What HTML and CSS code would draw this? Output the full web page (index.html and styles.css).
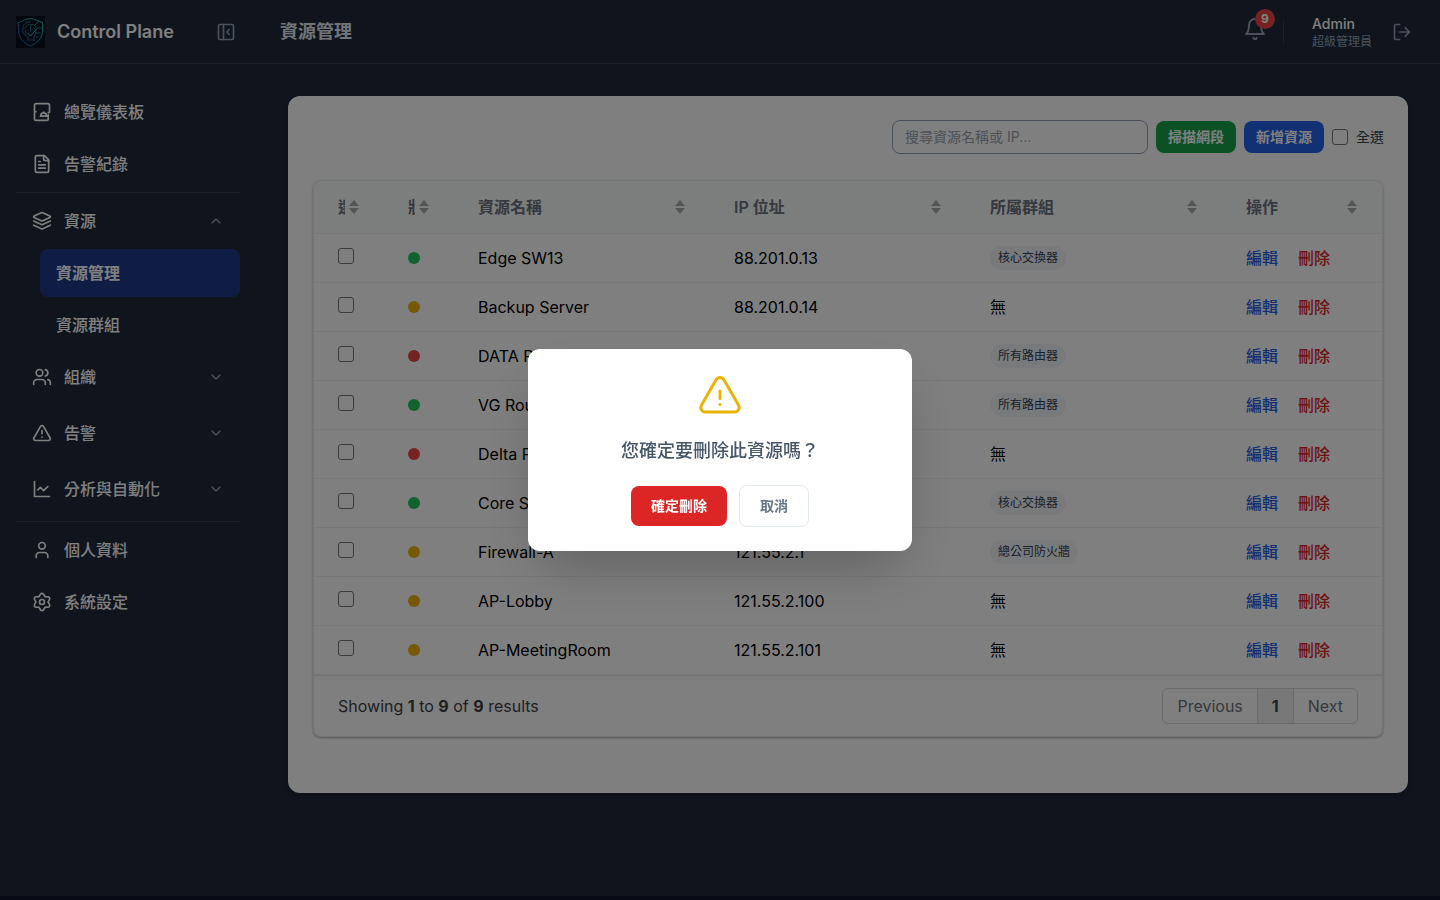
FILE: index.html
```html
<!DOCTYPE html>
<html lang="zh-TW">
<head>
<meta charset="utf-8">
<meta name="viewport" content="width=device-width, initial-scale=1">
<title>資源管理 - Control Plane</title>
<link rel="stylesheet" href="styles.css">
</head>
<body>
<svg class="sprite" aria-hidden="true">
  <symbol id="chevron-down" viewBox="0 0 24 24"><path d="m6 9 6 6 6-6"/></symbol>
  <symbol id="chevron-up" viewBox="0 0 24 24"><path d="m18 15-6-6-6 6"/></symbol>
  <symbol id="sort" viewBox="0 0 10 14"><path d="M0 6 5 0l5 6zM0 8l5 6 5-6z"/></symbol>
</svg>
<div class="app">
  <header class="topbar">
    <div class="brand">
      <svg class="logo" viewBox="0 0 29 32" aria-hidden="true">
        <defs><linearGradient id="lg" x1="0" y1="1" x2="1" y2="0"><stop offset="0" stop-color="#1d4fc0"/><stop offset=".5" stop-color="#1f90a0"/><stop offset="1" stop-color="#35c6a8"/></linearGradient></defs>
        <rect width="29" height="32" fill="#07101f" stroke="none"/>
        <g fill="none" stroke="url(#lg)">
          <path d="M2.5 6.500C7 5.500 10 2.500 14.500 2.500S22 5.500 26.500 6.500V15c0 7-5 12-12 15C7.500 27 2.500 22 2.500 15z"/>
          <path stroke-opacity=".8" d="M7 13c-1-4 3-7 7-7M9 12c1-3 4-4 6-3M7 13c-1 3 0 5 2 6M15 9c2-1 4 0 5 2M10 14c-2 3 0 6 2 7v3M14.500 11v4M18 12c3 2 2 6 0 9v3M12 24h6M19 9l4-4M21 12h4M20 17h4M20 21h2"/>
          <path d="m11.500 17 3 3 6-7" stroke="#38b8e0"/>
        </g>
      </svg>
      <span class="brand-name">Control Plane</span>
      <button class="icon-btn collapse" type="button" aria-label="收合側邊欄"><svg class="icon" viewBox="0 0 24 24"><rect x="3" y="3" width="18" height="18" rx="2"/><path d="M9 3v18M16 15l-3-3 3-3"/></svg></button>
    </div>
    <h1 class="title">資源管理</h1>
    <button class="bell" type="button" aria-label="通知"><svg class="icon-lg" viewBox="0 0 24 24"><path d="M6 8a6 6 0 0 1 12 0c0 7 3 9 3 9H3s3-2 3-9"/><path d="M10.300 21a1.940 1.940 0 0 0 3.400 0"/></svg><span class="badge">9</span></button>
    <div class="account"><span class="account-name">Admin</span><span class="account-role">超級管理員</span></div>
    <button class="icon-btn" type="button" aria-label="登出"><svg class="icon" viewBox="0 0 24 24"><path d="M9 21H5a2 2 0 0 1-2-2V5a2 2 0 0 1 2-2h4M16 17l5-5-5-5M21 12H9"/></svg></button>
  </header>
  <div class="body">
    <nav class="sidebar">
      <div class="nav-group">
        <a class="nav-link" href="#"><svg class="icon" viewBox="0 0 24 24"><path d="M19.500 15.500V20a2 2 0 0 1-2 2H5a2 2 0 0 1-2-2V4a2 2 0 0 1 2-2h14a2 2 0 0 1 2 2v8l-1.500 1M4.800 11.600h.01M10 17h9.500M10.500 16.500a3.500 3.500 0 0 1 7 0M14 12v1"/></svg>總覽儀表板</a>
        <a class="nav-link" href="#"><svg class="icon" viewBox="0 0 24 24"><path d="M15 2H6a2 2 0 0 0-2 2v16a2 2 0 0 0 2 2h12a2 2 0 0 0 2-2V7z"/><path d="M14 2v4a2 2 0 0 0 2 2h4M10 9H8M16 13H8M16 17H8"/></svg>告警紀錄</a>
      </div>
      <hr class="rule">
      <button class="nav-link" type="button"><svg class="icon" viewBox="0 0 24 24"><path d="m12.830 2.180a2 2 0 0 0-1.660 0L2.600 6.080a1 1 0 0 0 0 1.830l8.580 3.910a2 2 0 0 0 1.660 0l8.580-3.900a1 1 0 0 0 0-1.830z"/><path d="m22 12-9.170 4.170a2 2 0 0 1-1.660 0L2 12M22 17l-9.170 4.170a2 2 0 0 1-1.660 0L2 17"/></svg>資源<svg class="chevron"><use href="#chevron-up"/></svg></button>
      <div class="subnav">
        <a class="nav-link active" href="#">資源管理</a>
        <a class="nav-link" href="#">資源群組</a>
      </div>
      <div class="sections">
        <button class="nav-link" type="button"><svg class="icon" viewBox="0 0 24 24"><path d="M16 21v-2a4 4 0 0 0-4-4H6a4 4 0 0 0-4 4v2"/><circle cx="9" cy="7" r="4"/><path d="M22 21v-2a4 4 0 0 0-3-3.870M16 3.130a4 4 0 0 1 0 7.750"/></svg>組織<svg class="chevron"><use href="#chevron-down"/></svg></button>
        <button class="nav-link" type="button"><svg class="icon" viewBox="0 0 24 24"><path d="m21.730 18-8-14a2 2 0 0 0-3.480 0l-8 14A2 2 0 0 0 4 21h16a2 2 0 0 0 1.730-3M12 9v4M12 17h.01"/></svg>告警<svg class="chevron"><use href="#chevron-down"/></svg></button>
        <button class="nav-link" type="button"><svg class="icon" viewBox="0 0 24 24"><path d="M3 3v18h18M19 9l-5 5-4-4-3 3"/></svg>分析與自動化<svg class="chevron"><use href="#chevron-down"/></svg></button>
      </div>
      <hr class="rule rule-late">
      <div class="nav-group">
        <a class="nav-link" href="#"><svg class="icon" viewBox="0 0 24 24"><path d="M19 21v-2a4 4 0 0 0-4-4H9a4 4 0 0 0-4 4v2"/><circle cx="12" cy="7" r="4"/></svg>個人資料</a>
        <a class="nav-link" href="#"><svg class="icon" viewBox="0 0 24 24"><defs><path id="tooth" d="M8.250 5.500C9.800 4.700 9.400 1.600 12 1.600S14.200 4.700 15.750 5.500"/></defs><use href="#tooth"/><use href="#tooth" transform="rotate(60 12 12)"/><use href="#tooth" transform="rotate(120 12 12)"/><use href="#tooth" transform="rotate(180 12 12)"/><use href="#tooth" transform="rotate(240 12 12)"/><use href="#tooth" transform="rotate(300 12 12)"/><circle cx="12" cy="12" r="3"/></svg>系統設定</a>
      </div>
    </nav>
    <main class="content">
      <section class="card">
        <div class="toolbar">
          <input class="search" type="search" placeholder="搜尋資源名稱或 IP..." aria-label="搜尋資源名稱或 IP">
          <button class="btn green" type="button">掃描網段</button>
          <button class="btn blue" type="button">新增資源</button>
          <label class="select-all"><input class="check" type="checkbox">全選</label>
        </div>
        <div class="grid">
          <table class="table">
            <colgroup><col class="c-tick"><col class="c-tick"><col class="c-wide"><col class="c-wide"><col class="c-wide"><col class="c-act"></colgroup>
            <thead><tr>
              <th><div class="th"><span>選取</span><button type="button" aria-label="排序"><svg><use href="#sort"/></svg></button></div></th>
              <th><div class="th"><span>狀態</span><button type="button" aria-label="排序"><svg><use href="#sort"/></svg></button></div></th>
              <th><div class="th"><span>資源名稱</span><button type="button" aria-label="排序"><svg><use href="#sort"/></svg></button></div></th>
              <th><div class="th"><span>IP 位址</span><button type="button" aria-label="排序"><svg><use href="#sort"/></svg></button></div></th>
              <th><div class="th"><span>所屬群組</span><button type="button" aria-label="排序"><svg><use href="#sort"/></svg></button></div></th>
              <th><div class="th"><span>操作</span><button type="button" aria-label="排序"><svg><use href="#sort"/></svg></button></div></th>
            </tr></thead>
            <tbody>
              <tr><td><input class="check" type="checkbox" aria-label="Edge SW13"></td><td><span class="dot up"></span></td><td>Edge SW13</td><td>88.201.0.13</td><td><span class="tag">核心交換器</span></td><td><div class="actions"><button class="edit" type="button">編輯</button><button class="del" type="button">刪除</button></div></td></tr>
              <tr><td><input class="check" type="checkbox" aria-label="Backup Server"></td><td><span class="dot warn"></span></td><td>Backup Server</td><td>88.201.0.14</td><td>無</td><td><div class="actions"><button class="edit" type="button">編輯</button><button class="del" type="button">刪除</button></div></td></tr>
              <tr><td><input class="check" type="checkbox" aria-label="DATA Router"></td><td><span class="dot down"></span></td><td>DATA Router</td><td>88.201.0.15</td><td><span class="tag">所有路由器</span></td><td><div class="actions"><button class="edit" type="button">編輯</button><button class="del" type="button">刪除</button></div></td></tr>
              <tr><td><input class="check" type="checkbox" aria-label="VG Router"></td><td><span class="dot up"></span></td><td>VG Router</td><td>88.201.0.16</td><td><span class="tag">所有路由器</span></td><td><div class="actions"><button class="edit" type="button">編輯</button><button class="del" type="button">刪除</button></div></td></tr>
              <tr><td><input class="check" type="checkbox" aria-label="Delta PC"></td><td><span class="dot down"></span></td><td>Delta PC</td><td>88.201.0.17</td><td>無</td><td><div class="actions"><button class="edit" type="button">編輯</button><button class="del" type="button">刪除</button></div></td></tr>
              <tr><td><input class="check" type="checkbox" aria-label="Core Switch"></td><td><span class="dot up"></span></td><td>Core Switch</td><td>121.55.2.2</td><td><span class="tag">核心交換器</span></td><td><div class="actions"><button class="edit" type="button">編輯</button><button class="del" type="button">刪除</button></div></td></tr>
              <tr><td><input class="check" type="checkbox" aria-label="Firewall-A"></td><td><span class="dot warn"></span></td><td>Firewall-A</td><td>121.55.2.1</td><td><span class="tag">總公司防火牆</span></td><td><div class="actions"><button class="edit" type="button">編輯</button><button class="del" type="button">刪除</button></div></td></tr>
              <tr><td><input class="check" type="checkbox" aria-label="AP-Lobby"></td><td><span class="dot warn"></span></td><td>AP-Lobby</td><td>121.55.2.100</td><td>無</td><td><div class="actions"><button class="edit" type="button">編輯</button><button class="del" type="button">刪除</button></div></td></tr>
              <tr><td><input class="check" type="checkbox" aria-label="AP-MeetingRoom"></td><td><span class="dot warn"></span></td><td>AP-MeetingRoom</td><td>121.55.2.101</td><td>無</td><td><div class="actions"><button class="edit" type="button">編輯</button><button class="del" type="button">刪除</button></div></td></tr>
            </tbody>
          </table>
          <div class="grid-footer">
            <div>Showing <b>1</b> to <b>9</b> of <b>9</b> results</div>
            <div class="pages"><button type="button">Previous</button><button class="current" type="button">1</button><button type="button">Next</button></div>
          </div>
        </div>
      </section>
    </main>
  </div>
</div>
<div class="overlay">
  <div class="modal" role="dialog" aria-modal="true" aria-labelledby="confirm-text">
    <svg class="modal-icon" viewBox="0 0 24 24"><path d="M12 9v3.750m-9.303 3.376c-.866 1.500.217 3.374 1.948 3.374h14.710c1.730 0 2.813-1.874 1.948-3.374L13.949 3.378c-.866-1.500-3.032-1.500-3.898 0L2.697 16.126zM12 15.750h.007v.008H12z"/></svg>
    <p class="modal-text" id="confirm-text">您確定要刪除此資源嗎？</p>
    <div class="modal-actions"><button class="confirm" type="button">確定刪除</button><button class="cancel" type="button">取消</button></div>
  </div>
</div>
</body>
</html>
```
FILE: styles.css
```css
* { box-sizing: border-box; }
body {
  margin: 0;
  background: #0f172a;
  color: #000;
  font: 16px/24px Inter, "Noto Sans CJK TC", sans-serif;
}
button, input { font: inherit; color: inherit; }
button { margin: 0; padding: 0; border: 0; background: none; }
a { color: inherit; text-decoration: none; }
svg { display: block; flex: none; fill: none; stroke: currentColor; stroke-width: 2; stroke-linecap: round; stroke-linejoin: round; }
.sprite { display: none; }
.icon { width: 20px; height: 20px; }
.icon-lg { width: 24px; height: 24px; }

.app { display: flex; flex-direction: column; min-height: calc(100vh - 4px); background: #1e293b; }
.topbar { display: flex; align-items: center; height: 64px; padding-right: 28px; border-bottom: 1px solid #334155; color: #94a3b8; }
.brand { display: flex; align-items: center; width: 256px; padding: 0 20px 0 16px; }
.logo { width: 29px; height: 32px; margin-right: 12px; stroke-width: 1; }
.brand-name { color: #fff; font-size: 18px; line-height: 28px; font-weight: 600; }
.collapse { margin-left: auto; }
.title { flex: 1; margin: 0; padding-left: 24px; color: #e2e8f0; font-size: 18px; line-height: 28px; font-weight: 700; }
.bell { position: relative; margin-right: 16px; padding-bottom: 6px; }
.badge { position: absolute; top: -8px; right: -8px; width: 20px; height: 20px; border-radius: 10px; background: #ef4444; color: #fff; font-size: 12px; line-height: 20px; font-weight: 700; }
.account { display: flex; flex-direction: column; margin-right: 20px; padding-left: 29px; position: relative; }
.account::before { content: ""; position: absolute; left: 0; top: 6px; height: 24px; border-left: 1px solid #334155; }
.account-name { color: #fff; font-size: 14px; line-height: 20px; font-weight: 500; }
.account-role { font-size: 12px; line-height: 16px; }

.body { display: flex; flex: 1; }
.sidebar { width: 256px; padding: 24px 16px; color: #fff; }
.nav-group, .subnav { display: flex; flex-direction: column; gap: 4px; }
.sections { display: flex; flex-direction: column; gap: 8px; margin-top: 4px; }
.nav-link { display: flex; align-items: center; gap: 12px; width: 100%; height: 48px; padding: 0 16px; border-radius: 8px; font-weight: 500; }
.subnav { padding: 4px 0 0 24px; }
.active { background: #1e3a8a; font-weight: 700; }
.chevron { width: 16px; height: 16px; margin-left: auto; color: #94a3b8; }
.rule { margin: 4px 0; border: 0; border-top: 1px solid #334155; }
.rule-late { margin-top: 8px; }

.content { flex: 1; min-width: 0; padding: 32px; }
.card { padding: 24px 24px 56px; border-radius: 12px; background: #fff; box-shadow: 0 4px 6px -1px rgba(0,0,0,.1), 0 2px 4px -2px rgba(0,0,0,.1); }
.toolbar { display: flex; justify-content: flex-end; align-items: center; gap: 8px; margin-bottom: 26px; font-size: 14px; line-height: 20px; }
.search { width: 256px; height: 34px; padding: 5px 12px 7px; border: 1px solid #94a3b8; border-radius: 8px; background: #fff; outline: 0; }
.search::placeholder { color: #9ca3af; }
.btn { height: 32px; padding: 0 12px 1px; border-radius: 8px; color: #fff; font-weight: 700; }
.green { background: #16a34a; }
.blue { background: #2563eb; }
.select-all { display: flex; align-items: center; gap: 8px; color: #334155; }
.check { appearance: none; display: block; width: 16px; height: 16px; margin: 0; border: 1px solid #767676; border-radius: 3px; background: #fff; }

.grid { margin: 0 1px; border: 1px solid #e5e7eb; border-radius: 8px; overflow: hidden; box-shadow: 0 1px 3px 0 rgba(0,0,0,.1), 0 1px 2px 0 rgba(0,0,0,.26); }
.table { width: 100%; table-layout: fixed; border-collapse: collapse; }
.c-tick { width: 70px; }
.c-act { width: 160px; }
.table th { height: 52px; padding: 0 25px 0 24px; border-bottom: 1px solid #f0f1f3; background: #f9fbfa; color: #6b7280; font-weight: 600; text-align: left; }
.th { display: flex; align-items: center; gap: 4px; }
.th span { flex: 1; min-width: 0; overflow: hidden; white-space: nowrap; }
.th svg { width: 10px; height: 14px; fill: #a8a8a8; stroke: none; }
.table td { height: 49px; padding: 0 24px; border-bottom: 1px solid #f0f1f3; }
.table td .check { margin-bottom: 4px; }
.dot { display: block; width: 12px; height: 12px; border-radius: 50%; }
.up { background: #22c55e; }
.warn { background: #eab308; }
.down { background: #ef4444; }
.tag { display: block; width: max-content; padding: 4px 8px; border-radius: 12px; background: #f1f5f9; color: #334155; font-size: 12px; line-height: 16px; }
.actions { display: flex; gap: 20px; white-space: nowrap; font-weight: 500; }
.edit { color: #2563eb; }
.del { color: #dc2626; }
.grid-footer { display: flex; justify-content: space-between; align-items: center; padding: 12px 24px; border-top: 1px solid #e5e7eb; color: #3d4044; }
.pages { display: flex; border: 1px solid #d2d6dc; border-radius: 6px; overflow: hidden; color: #6b7280; }
.pages button { height: 34px; padding: 0 14px; }
.pages button + button { border-left: 1px solid #d2d6dc; }
.pages .current { background: #f1f1f1; color: #3c4257; font-weight: 700; }

.overlay { position: fixed; inset: 0; display: flex; align-items: center; justify-content: center; background: rgba(0,0,0,.5); }
.modal { display: flex; flex-direction: column; align-items: center; width: 384px; padding: 24px; border-radius: 12px; background: #fff; box-shadow: 0 25px 50px -12px rgba(0,0,0,.25); }
.modal-icon { width: 48px; height: 48px; color: #eab308; stroke-width: 1.5; }
.modal-text { margin: 16px 0 20px; color: #475569; font-size: 18px; line-height: 28px; font-weight: 500; }
.modal-actions { display: flex; align-items: center; gap: 12px; font-size: 14px; line-height: 20px; }
.confirm { height: 40px; padding: 0 20px; border-radius: 8px; background: #dc2626; color: #fff; font-weight: 700; }
.cancel { height: 42px; padding: 0 20px; border: 1px solid #e2e8f0; border-radius: 8px; color: #64748b; font-weight: 600; }
```
